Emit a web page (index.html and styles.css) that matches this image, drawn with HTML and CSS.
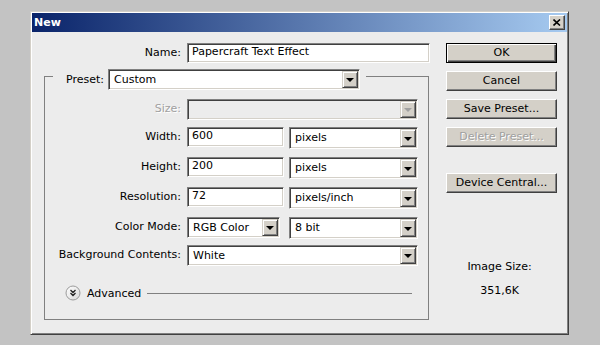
FILE: index.html
```html
<!DOCTYPE html>
<html lang="en">
<head>
  <meta charset="UTF-8">
  <title>New</title>
  <link rel="stylesheet" href="styles.css">
</head>
<body>
  <div class="window">
    <div class="titlebar">
      <span class="title">New</span>
      <span class="close-btn">
        <svg width="8" height="7" viewBox="0 0 8 7"><path d="M0.5 0.5 L7 6.5 M7 0.5 L0.5 6.5" stroke="#000" stroke-width="1.6" fill="none"/></svg>
      </span>
    </div>
    <div class="dialog">
      <div class="form">
        <div class="name-row">
          <span class="label">Name:</span>
          <div class="text-field name-field">Papercraft Text Effect</div>
        </div>
        <fieldset class="group">
          <legend class="preset">
            <span class="label">Preset:</span>
            <div class="combo preset-combo"><span class="value">Custom</span><span class="arrow"></span></div>
          </legend>
          <div class="rows">
            <span class="label disabled">Size:</span>
            <div class="combo full is-disabled"><span class="value"></span><span class="arrow"></span></div>

            <span class="label">Width:</span>
            <div class="pair">
              <div class="text-field short">600</div>
              <div class="combo unit"><span class="value">pixels</span><span class="arrow"></span></div>
            </div>

            <span class="label">Height:</span>
            <div class="pair">
              <div class="text-field short">200</div>
              <div class="combo unit"><span class="value">pixels</span><span class="arrow"></span></div>
            </div>

            <span class="label">Resolution:</span>
            <div class="pair">
              <div class="text-field short">72</div>
              <div class="combo unit"><span class="value">pixels/inch</span><span class="arrow"></span></div>
            </div>

            <span class="label">Color Mode:</span>
            <div class="pair">
              <div class="combo mode"><span class="value">RGB Color</span><span class="arrow"></span></div>
              <div class="combo unit"><span class="value">8 bit</span><span class="arrow"></span></div>
            </div>

            <span class="label">Background Contents:</span>
            <div class="combo full"><span class="value">White</span><span class="arrow"></span></div>
          </div>
          <div class="advanced">
            <svg class="adv-icon" width="16" height="16" viewBox="0 0 16 16">
              <defs>
                <linearGradient id="advGrad" x1="0" y1="0" x2="1" y2="1">
                  <stop offset="0" stop-color="#ffffff"/>
                  <stop offset="1" stop-color="#d8d8d8"/>
                </linearGradient>
              </defs>
              <circle cx="8" cy="8" r="7" fill="url(#advGrad)" stroke="#9c9c9c"/>
              <path d="M5.5 5 L8 7.5 L10.5 5 M5.5 8 L8 10.5 L10.5 8" stroke="#222" stroke-width="1.3" fill="none"/>
            </svg>
            <span class="adv-text">Advanced</span>
            <span class="adv-line"></span>
          </div>
        </fieldset>
      </div>
      <div class="actions">
        <div class="btn default">OK</div>
        <div class="btn">Cancel</div>
        <div class="btn">Save Preset...</div>
        <div class="btn is-disabled">Delete Preset...</div>
        <div class="btn device">Device Central...</div>
        <div class="info">
          <div class="info-label">Image Size:</div>
          <div class="info-value">351,6K</div>
        </div>
      </div>
    </div>
  </div>
</body>
</html>
```

FILE: styles.css
```css
* {
  margin: 0;
  padding: 0;
  box-sizing: border-box;
}

body {
  background-color: #c3c3c3;
  font-family: "DejaVu Sans", sans-serif;
  font-size: 11px;
  color: #000;
}

.window {
  width: 539px;
  height: 324px;
  margin: 11px 0 0 30px;
  padding: 1px;
  display: flex;
  flex-direction: column;
  background-color: #ececec;
  border: 1px solid;
  border-color: #d4d0c8 #404040 #404040 #d4d0c8;
  box-shadow: inset 1px 1px #fff, inset -1px -1px #808080;
}

/* title bar */
.titlebar {
  height: 19px;
  display: flex;
  align-items: center;
  justify-content: space-between;
  padding: 0 2px 0 2px;
  background: linear-gradient(to right, #0a246a, #a6caf0);
}

.title {
  color: #fff;
  font-weight: bold;
  font-size: 11px;
}

.close-btn {
  width: 16px;
  height: 15px;
  display: flex;
  align-items: center;
  justify-content: center;
  background-color: #d4d0c8;
  border: 1px solid;
  border-color: #fff #404040 #404040 #fff;
  box-shadow: inset -1px -1px #808080;
}

/* dialog body */
.dialog {
  flex: 1;
  display: flex;
  padding: 11px 0 0 12px;
}

.form {
  width: 386px;
}

.label {
  white-space: nowrap;
  line-height: 20px;
}

.label.disabled {
  color: #a0a0a0;
  text-shadow: 1px 1px 0 #fff;
}

.name-row {
  display: grid;
  grid-template-columns: 137px 243px;
  column-gap: 6px;
}

.name-row .label {
  justify-self: end;
}

.text-field {
  height: 20px;
  padding-left: 4px;
  line-height: 16px;
  background-color: #fff;
  border: 1px solid;
  border-color: #808080 #fff #fff #808080;
  box-shadow: inset 1px 1px #404040, inset -1px -1px #d4d0c8;
  white-space: nowrap;
}

.text-field.short {
  width: 97px;
}

/* combos */
.combo {
  height: 21px;
  display: flex;
  background-color: #fff;
  border: 1px solid;
  border-color: #808080 #fff #fff #808080;
  box-shadow: inset 1px 1px #404040, inset -1px -1px #d4d0c8;
  padding: 1px;
}

.combo .value {
  flex: 1;
  padding-left: 4px;
  line-height: 17px;
  white-space: nowrap;
}

.combo .arrow {
  width: 16px;
  display: flex;
  align-items: center;
  justify-content: center;
  background-color: #d4d0c8;
  border: 1px solid;
  border-color: #d4d0c8 #404040 #404040 #d4d0c8;
  box-shadow: inset 1px 1px #fff, inset -1px -1px #808080;
}

.combo .arrow:after {
  content: '';
  border-left: 4px solid transparent;
  border-right: 4px solid transparent;
  border-top: 4px solid #000;
  margin-top: 1px;
}

.combo.is-disabled {
  background-color: #ececec;
}

.combo.is-disabled .arrow:after {
  border-top-color: #a0a0a0;
}

.preset-combo {
  width: 252px;
}

.combo.full {
  width: 231px;
}

.combo.unit {
  width: 129px;
  height: 22px;
}

.combo.mode {
  width: 93px;
}

/* group box */
.group {
  width: 385px;
  border: 1px solid #808080;
  padding: 9px 0 18px 0;
}

.preset {
  display: flex;
  align-items: center;
  gap: 4px;
  margin-left: 8px;
  padding: 6px 6px 0 13px;
}

.rows {
  display: grid;
  grid-template-columns: 136px 231px;
  grid-template-rows: 28px 30px 30px 30px 28px 22px;
  column-gap: 6px;
  align-items: start;
}

.rows .label {
  justify-self: end;
}

.pair {
  display: flex;
  justify-content: space-between;
}

.advanced {
  display: flex;
  align-items: center;
  height: 16px;
  margin-top: 18px;
  padding: 0 16px 0 20px;
}

.adv-text {
  margin-left: 6px;
}

.adv-line {
  flex: 1;
  margin-left: 6px;
  border-top: 1px solid #808080;
}

/* buttons */
.actions {
  width: 111px;
  margin-left: 16px;
  display: flex;
  flex-direction: column;
}

.btn {
  height: 20px;
  margin-bottom: 8px;
  text-align: center;
  line-height: 17px;
  background-color: #d4d0c8;
  border: 1px solid;
  border-color: #fff #404040 #404040 #fff;
  box-shadow: inset -1px -1px #808080;
}

.btn.default {
  border-color: #000;
  box-shadow: inset 1px 1px #fff, inset -1px -1px #404040, inset -2px -2px #808080;
}

.btn.is-disabled {
  color: #a0a0a0;
  text-shadow: 1px 1px 0 #fff;
}

.btn.device {
  margin-top: 18px;
}

.info {
  margin-top: 59px;
  padding-right: 4px;
  text-align: center;
  line-height: 14px;
}

.info-value {
  margin-top: 10px;
}
```
